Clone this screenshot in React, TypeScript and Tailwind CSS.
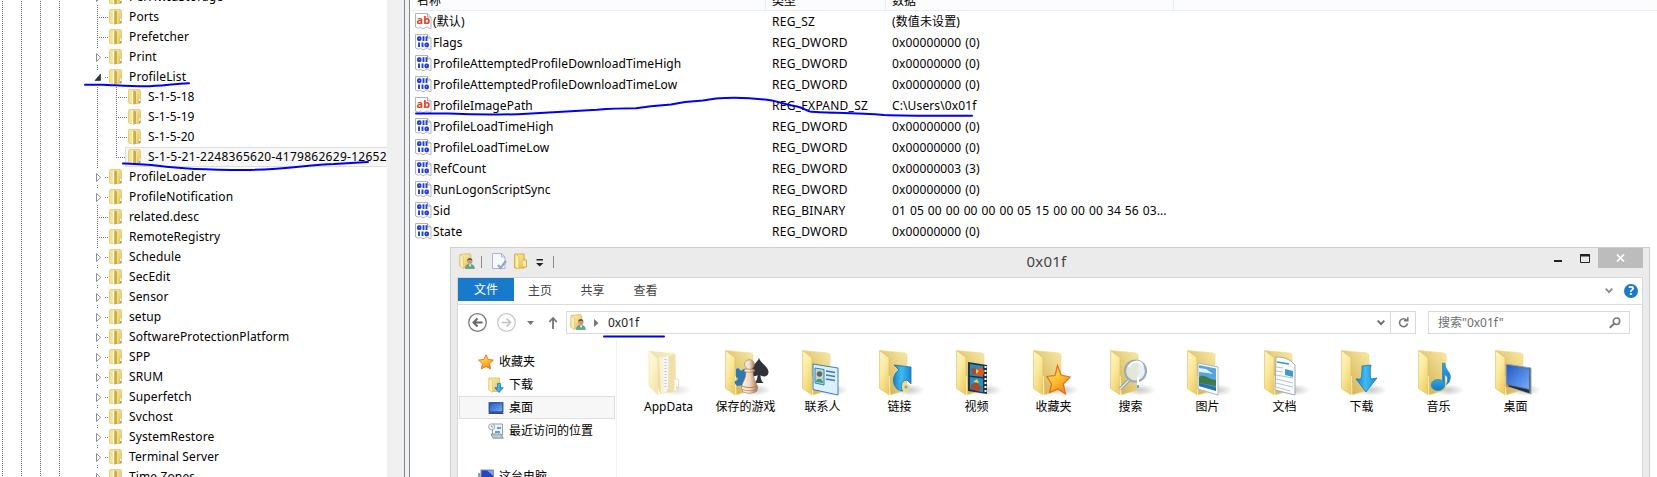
import React from "react";

const uiFont = "font-['Noto_Sans','Noto_Sans_CJK_SC',sans-serif]";

type TreeItem = { label: string; kind: "leaf" | "closed" | "open" | "child" | "last" };

const tree: TreeItem[] = [
  { label: "PerHwIdStorage", kind: "closed" },
  { label: "Ports", kind: "leaf" },
  { label: "Prefetcher", kind: "leaf" },
  { label: "Print", kind: "closed" },
  { label: "ProfileList", kind: "open" },
  { label: "S-1-5-18", kind: "child" },
  { label: "S-1-5-19", kind: "child" },
  { label: "S-1-5-20", kind: "child" },
  { label: "S-1-5-21-2248365620-4179862629-12652", kind: "last" },
  { label: "ProfileLoader", kind: "closed" },
  { label: "ProfileNotification", kind: "closed" },
  { label: "related.desc", kind: "leaf" },
  { label: "RemoteRegistry", kind: "leaf" },
  { label: "Schedule", kind: "closed" },
  { label: "SecEdit", kind: "closed" },
  { label: "Sensor", kind: "closed" },
  { label: "setup", kind: "closed" },
  { label: "SoftwareProtectionPlatform", kind: "closed" },
  { label: "SPP", kind: "closed" },
  { label: "SRUM", kind: "closed" },
  { label: "Superfetch", kind: "closed" },
  { label: "Svchost", kind: "closed" },
  { label: "SystemRestore", kind: "closed" },
  { label: "Terminal Server", kind: "closed" },
  { label: "Time Zones", kind: "closed" },
];

const values: [string, string, string][] = [
  ["(默认)", "REG_SZ", "(数值未设置)"],
  ["Flags", "REG_DWORD", "0x00000000 (0)"],
  ["ProfileAttemptedProfileDownloadTimeHigh", "REG_DWORD", "0x00000000 (0)"],
  ["ProfileAttemptedProfileDownloadTimeLow", "REG_DWORD", "0x00000000 (0)"],
  ["ProfileImagePath", "REG_EXPAND_SZ", "C:\\Users\\0x01f"],
  ["ProfileLoadTimeHigh", "REG_DWORD", "0x00000000 (0)"],
  ["ProfileLoadTimeLow", "REG_DWORD", "0x00000000 (0)"],
  ["RefCount", "REG_DWORD", "0x00000003 (3)"],
  ["RunLogonScriptSync", "REG_DWORD", "0x00000000 (0)"],
  ["Sid", "REG_BINARY", "01 05 00 00 00 00 00 05 15 00 00 00 34 56 03..."],
  ["State", "REG_DWORD", "0x00000000 (0)"],
];

function Gradients() {
  return (
    <svg className="absolute h-0 w-0">
      <defs>
        <linearGradient id="flap" x1="0" y1="0" x2="0.6" y2="1">
          <stop offset="0" stopColor="#fdf6c8" />
          <stop offset="0.5" stopColor="#fbea9e" />
          <stop offset="1" stopColor="#efd068" />
        </linearGradient>
        <linearGradient id="inner" x1="1" y1="0" x2="0" y2="1">
          <stop offset="0" stopColor="#f8e9a6" />
          <stop offset="0.5" stopColor="#e3c975" />
          <stop offset="1" stopColor="#cda64c" />
        </linearGradient>
        <linearGradient id="small" x1="0" y1="0" x2="1" y2="1">
          <stop offset="0" stopColor="#fbf3bb" />
          <stop offset="1" stopColor="#e0bf55" />
        </linearGradient>
        <linearGradient id="blue" x1="0" y1="0" x2="0" y2="1">
          <stop offset="0" stopColor="#2fa8e8" />
          <stop offset="1" stopColor="#1378bf" />
        </linearGradient>
        <linearGradient id="bright" x1="0" y1="0" x2="1" y2="0">
          <stop offset="0" stopColor="#1b81c8" />
          <stop offset="0.45" stopColor="#3fbcf3" />
          <stop offset="1" stopColor="#1d87cf" />
        </linearGradient>
        <linearGradient id="screen" x1="0" y1="0" x2="1" y2="1">
          <stop offset="0" stopColor="#2458c4" />
          <stop offset="1" stopColor="#71aefc" />
        </linearGradient>
        <linearGradient id="star" x1="0" y1="0" x2="0.6" y2="1">
          <stop offset="0" stopColor="#fff3a0" />
          <stop offset="0.55" stopColor="#fdc02e" />
          <stop offset="1" stopColor="#f08a1c" />
        </linearGradient>
        <linearGradient id="pawn" x1="0" y1="0" x2="1" y2="0">
          <stop offset="0" stopColor="#fff6ea" />
          <stop offset="0.5" stopColor="#f0d9c0" />
          <stop offset="1" stopColor="#a87c5a" />
        </linearGradient>
        <radialGradient id="shade">
          <stop offset="0" stopColor="#777" stopOpacity="0.4" />
          <stop offset="1" stopColor="#777" stopOpacity="0" />
        </radialGradient>
      </defs>
    </svg>
  );
}

function SmallFolder() {
  return (
    <svg width="13" height="16" viewBox="0 0 13 16" className="shrink-0">
      <path d="M1 .6h10.6l1 1v12.3l-1 .6H1.5L.4 13.6V1.4z" fill="url(#small)" stroke="#dcc374" strokeWidth=".8" />
      <path d="M1 1.200h3.200v13H1z" fill="#f5e48e" />
      <path d="M3.800 2.500 5.500 1.500v14L3.800 14.500z" fill="#fffbe0" />
      <path d="M5.300 1.200 8 2.400v12.200l-2.700 1.100z" fill="#d0aa40" />
      <path d="M8 2.200 9 1.300v12.500l-1 .8z" fill="#f3df8e" />
      <path d="M11.200 9.500h1v4h-1z" fill="#fff" />
      <path d="M11.200 12h1v2h-1z" fill="#38a1dc" />
    </svg>
  );
}

function Gutter({ kind }: { kind: TreeItem["kind"] }) {
  const nested = kind === "child" || kind === "last";
  const vertical = kind === "leaf" || nested ? "M37.5 0v20" : kind === "open" ? "M37.5 0v3" : "M37.5 0v2M37.5 18v2";
  const arrow = kind === "closed" || kind === "open";
  return (
    <svg width={nested ? 68 : 49} height="20" className="shrink-0" shapeRendering="crispEdges">
      <g stroke="#707070" strokeDasharray="1 1" fill="none">
        <path d={vertical} />
        {kind === "leaf" && <path d="M39 10.5h9" />}
        {arrow && <path d="M45 10.5h3" />}
        {nested && <path d={kind === "last" ? "M56.5 0v11" : "M56.5 0v20"} />}
        {nested && <path d="M58 10.5h9" />}
      </g>
      {kind === "closed" && (
        <path d="M36.500 6.500v8l4.200-4z" fill="#fff" stroke="#8f8f8f" shapeRendering="auto" />
      )}
      {kind === "open" && <path d="M40.500 7v6.500h-5.500z" fill="#333" stroke="#222" strokeWidth=".6" shapeRendering="auto" />}
    </svg>
  );
}

function TreeRow({ item }: { item: TreeItem }) {
  const selected = item.kind === "last";
  return (
    <div className="flex h-5 shrink-0 items-center">
      <Gutter kind={item.kind} />
      <div
        className={
          selected
            ? "-ml-[3px] flex h-5 w-[262px] items-center border-y border-l border-[#dedede] bg-[#f7f7f7] pl-[2px]"
            : "flex h-5 items-center"
        }
      >
        <SmallFolder />
        <span
          className={
            selected
              ? "ml-[7px] text-[12px] leading-5 tracking-[0.28px] whitespace-nowrap"
              : "ml-[7px] text-[12px] leading-5 tracking-[0.12px] whitespace-nowrap"
          }
        >
          {item.label}
        </span>
      </div>
    </div>
  );
}

function Guide() {
  return <div className="w-px bg-[repeating-linear-gradient(to_bottom,#fff_0_1px,#666_1px_2px)]" />;
}

function ValueIcon({ text }: { text: boolean }) {
  return (
    <svg width="17" height="17" viewBox="0 0 17 17" className="shrink-0">
      <path
        d="M.5.5h12l3.500 3.500v11.500l-2-.2-1.500-1.300-2 .4-1.500 1.200-2-.2-1.500-1.200-2 1-3-1.200z"
        fill="#fff"
        stroke="#b4b4b4"
      />
      <path d="M12.500.5V4H16" fill="#eee" stroke="#999" strokeWidth=".8" />
      {text ? (
        <text x="1.500" y="10.500" fontSize="11" fontWeight="700" fill="#d9431e" className="font-['Open_Sans',sans-serif]">
          ab
        </text>
      ) : (
        <g stroke="#1f3fd6" strokeWidth="1.900" fill="none">
          <rect x="3" y="3.200" width="2.600" height="2.800" rx=".8" />
          <path d="M8.500 2.300v4.600M11.500 2.300v4.600M4 8.500v4.600M7.500 8.500v4.600" />
          <rect x="10.400" y="9.400" width="2.600" height="2.800" rx=".8" />
        </g>
      )}
    </svg>
  );
}

function Registry() {
  return (
    <div className="flex h-full flex-1 flex-col bg-white text-[12px]">
      <div className="flex h-[11px] shrink-0 items-end overflow-hidden border-b border-[#e3eef9] bg-[#fcfcfc] leading-[16px]">
        <div className="h-[17px] w-[355px] shrink-0 border-r border-[#e3eef9] pl-[6px]">名称</div>
        <div className="h-[17px] w-[120px] shrink-0 border-r border-[#e3eef9] pl-[6px]">类型</div>
        <div className="h-[17px] w-[288px] shrink-0 border-r border-[#e3eef9] pl-[6px]">数据</div>
      </div>
      {values.map(([name, type, data]) => (
        <div key={name} className="flex h-[21px] shrink-0 items-center whitespace-nowrap">
          <div className="flex w-[361px] items-center gap-px pl-[4px]">
            <ValueIcon text={type.endsWith("SZ")} />
            <span className="tracking-[0.1px]">{name}</span>
          </div>
          <div className="w-[120px] tracking-[0.25px]">{type}</div>
          <div className="tracking-[0.12px] [word-spacing:0.7px]">{data}</div>
        </div>
      ))}
    </div>
  );
}

function UserFolder() {
  return (
    <svg width="17" height="17" viewBox="0 0 17 17" className="shrink-0">
      <path d="M1 1.500 8 .8h3l.8 1v13H5L.8 13z" fill="url(#small)" stroke="#d9b85c" strokeWidth=".8" />
      <path d="M1 1.500 4.500 4v12L1 13.300z" fill="#fbeeb0" stroke="#dcbf68" strokeWidth=".6" />
      <path d="M6.500 15.500c0-3 1.500-4.200 4.200-4.200s4.500 1.200 4.800 4.200z" fill="#5fa98a" stroke="#3c8567" strokeWidth=".5" />
      <path d="m9.800 11.500 1.300 2.500 1.200-2.500z" fill="#fff" />
      <circle cx="10.800" cy="8.200" r="2.600" fill="#c49a7e" />
      <path d="M8.200 7.600c0-3.600 5.200-3.600 5.200 0-1.400-1.200-3.800-1.200-5.200 0z" fill="#5c5248" />
    </svg>
  );
}

function StarPath({ s = 1, x = 0, y = 0 }: { s?: number; x?: number; y?: number }) {
  return (
    <path
      transform={`translate(${x} ${y}) scale(${s})`}
      d="m8 .8 2.200 4.700 5.200.6-3.800 3.600 1 5.200L8 12.400l-4.600 2.500 1-5.200L.6 6.100l5.200-.6z"
      fill="url(#star)"
      stroke="#e0701c"
      strokeWidth=".9"
    />
  );
}

function SideIcon({ name }: { name: string }) {
  return (
    <svg width="16" height="16" viewBox="0 0 16 16" className="shrink-0">
      {name === "star" && <StarPath />}
      {name === "download" && (
        <>
          <path d="M1 1h10.500v13.500H4L1 13z" fill="url(#small)" stroke="#dcb95c" strokeWidth=".8" />
          <path d="m1 1 3.500 2v12.500L1 13.200z" fill="#fbefae" stroke="#dcbf68" strokeWidth=".6" />
          <path d="M9.500 6.500h3v4.200h2.700L11 15.600l-4.200-4.900h2.700z" fill="url(#bright)" stroke="#1671b5" strokeWidth=".7" />
        </>
      )}
      {name === "desktop" && (
        <>
          <rect x=".5" y="2" width="15" height="12" fill="#9aa6b4" />
          <rect x="1.200" y="2.800" width="13.600" height="9" fill="url(#screen)" stroke="#1c3e86" strokeWidth=".8" />
          <path d="M1 12.200h14V14H1z" fill="#37475e" />
        </>
      )}
      {name === "recent" && (
        <>
          <path d="M4.500 1h10v11H4.500z" fill="#eef3f7" stroke="#8a949d" strokeWidth=".9" />
          <path d="M3 11h10l2.400 4.200H5z" fill="#c0c8ce" stroke="#7d878f" strokeWidth=".8" />
          <path d="M9 4h4v2H9zM7 8h5v2H7z" fill="#59a5cf" />
          <circle cx="3.600" cy="3.800" r="3" fill="#fafafa" stroke="#8f979e" strokeWidth=".9" />
          <path d="M3.600 2.200v1.800h1.500" fill="none" stroke="#666" strokeWidth=".7" />
        </>
      )}
      {name === "computer" && (
        <>
          <rect x="3" y="1" width="12.500" height="9.500" fill="#2346c8" stroke="#8793a5" />
          <path d="M9 1.500h6v5z" fill="#7ba3f5" />
          <rect x="0" y="4" width="2.500" height="10" fill="#9aa3ad" />
          <path d="M.5 5h1.500v2H.5z" fill="#4bc04f" />
        </>
      )}
    </svg>
  );
}

const folders = [
  ["AppData", "appdata"],
  ["保存的游戏", "games"],
  ["联系人", "contacts"],
  ["链接", "links"],
  ["视频", "video"],
  ["收藏夹", "favorites"],
  ["搜索", "search"],
  ["图片", "pictures"],
  ["文档", "documents"],
  ["下载", "downloads"],
  ["音乐", "music"],
  ["桌面", "desktop"],
];

function Emblem({ name }: { name: string }) {
  switch (name) {
    case "games":
      return (
        <>
          <path d="M11 20c2-1 3-1 4 1 2 2 3-2 6-1v16l-9 1c-1-2-3-2-2-5 3 0 4-3 1-4z" fill="#2f78b0" />
          <path d="M34 9c1.500 5 9.500 9 9.500 14 0 5-6 5.500-8 3 0 4 1 6 3 8h-9c2-2 3-4 3-8-3 2.500-8 1-8-3 0-5 8-9 9.500-14z" fill="#30343a" />
          <path d="M19 39c2-1 10-1 13 0v3c-4 3-11 3-15 0z" fill="url(#pawn)" stroke="#9f7350" strokeWidth=".6" />
          <path d="M21 21h7c0 6 1 9 3 12.500l1.500 4v2c-3 3-13 3-16 0v-2l1.500-4c2-3.500 3-7 3-12.500z" fill="url(#pawn)" stroke="#9f7350" strokeWidth=".6" />
          <ellipse cx="24.500" cy="21.500" rx="5.500" ry="1.800" fill="url(#pawn)" stroke="#9f7350" strokeWidth=".6" />
          <circle cx="24.500" cy="15.500" r="4.800" fill="url(#pawn)" stroke="#9f7350" strokeWidth=".6" />
          <path d="M17 37c4 2 11 2 15 0" fill="none" stroke="#a87c58" />
        </>
      );
    case "contacts":
      return (
        <>
          <path d="m11 15 25 4v27l-25-5.500z" fill="#dbeffc" stroke="#3d82b4" />
          <path d="m13 19 9 1.500V36l-9-2z" fill="#b5dcd3" stroke="#3d7fae" />
          <circle cx="17.500" cy="25" r="2.700" fill="#76614d" />
          <path d="M14 33c0-5 7-4 7 1z" fill="#4a987b" />
          <path d="m24 22 9 1.500M24 26l9 1.500M24 30l9 1.500" stroke="#3d7bb1" strokeWidth="1.500" />
        </>
      );
    case "links":
      return (
        <>
          <path d="m26 33 5 4-2 5-5 1-2-5z" fill="#f3d98a" />
          <circle cx="27" cy="38" r="1.500" fill="#5aa9ed" />
          <path d="m15 16 17 2v17l-4-4c-6 0-7 6-4.500 11-10-1-12.500-15-3.500-21z" fill="url(#bright)" stroke="#1373b8" strokeWidth=".8" />
        </>
      );
    case "video":
      return (
        <>
          <path d="m12 13 19 3v29l-19-3z" fill="#26333b" />
          <path d="m14 15 13 2v11l-13-1.500zM14 28l13 1.500v14L14 40z" fill="#2190c9" />
          <circle cx="24" cy="23" r="4" fill="#e75424" />
          <path d="m15 20 4-2 2 7-5 1zM15 36l5-3 6 6-3 3-8-2z" fill="#a8482c" />
          <path d="m20 20 3 2-3 3zM17 33l4-3 2 4z" fill="#f8ce38" />
          <path d="M29.500 17v27" stroke="#fff" strokeWidth="2" strokeDasharray="2 2" />
        </>
      );
    case "favorites":
      return (
        <path
          d="m24.500 16.500 3.600 9.500 9 2-6.800 7 2.200 10-7.600-5-8.400 3.500 2-8.500-4.500-7.500 8-1z"
          fill="url(#star)"
          stroke="#e0701c"
          strokeWidth="1.200"
        />
      );
    case "search":
      return (
        <>
          <path d="m19 31-9 9" stroke="#8fa0ae" strokeWidth="3.500" />
          <path d="m19 31-9 9" stroke="#e4ebf0" strokeWidth="1.500" />
          <circle cx="25.500" cy="22" r="10.500" fill="#dfedf3" fillOpacity=".75" stroke="#9cabb8" strokeWidth="2.200" />
          <path d="M19 18c3-7 11-7 14-1" fill="none" stroke="#fff" strokeWidth="2" />
          <path d="M28 28v10" stroke="#fff" strokeWidth="2" />
          <path d="M28 36v3" stroke="#5aabe8" strokeWidth="2" />
        </>
      );
    case "pictures":
      return (
        <>
          <path d="m11 14 20 4v28l-20-6z" fill="#fafcfd" stroke="#aeb9c1" />
          <path d="m12 16 17 3.500v22L12 37z" fill="#58a4df" />
          <path d="m12 19 7 1 7 5-5-1-9-1z" fill="#e3f3fc" />
          <path d="M12 28c6-4 9 3 17 3v6l-17-3z" fill="#3e7b48" />
          <path d="m12 34 17 4v4L12 37z" fill="#2772a8" />
        </>
      );
    case "documents":
      return (
        <>
          <path d="M12 8c8 0 14 2 19 8v30l-20-5z" fill="#fafcfc" stroke="#9eabb4" />
          <path d="m13 13 12 2" stroke="#319aaa" strokeWidth="1.500" />
          <path d="m12 18 7 1M12 22l7 1M12 26l17 3M12 30l17 4M12 34l17 4M12 38l14 4" stroke="#b9c3ca" />
          <path d="m21 20 8 2v6l-8-2z" fill="#4299cc" />
        </>
      );
    case "downloads":
      return (
        <path
          d="m21 17 9-1c-1 5-1 9 0 14l6-1-11 14-10-13 5 0c1-5 1-9 1-13z"
          fill="url(#bright)"
          stroke="#1d79b8"
          strokeWidth=".8"
        />
      );
    case "music":
      return (
        <>
          <path d="M24.500 14 27 14.500c0 8 7 8 5 16-.5 3-2 4-3.500 5 2-6 1-9-2-10v10h-2z" fill="url(#blue)" stroke="#2e8bc1" strokeWidth=".8" />
          <ellipse cx="20" cy="36" rx="6.800" ry="5.500" fill="url(#blue)" stroke="#2e8bc1" strokeWidth=".8" />
        </>
      );
    case "desktop":
      return (
        <>
          <path d="m11 15 25 4v26l-25-8z" fill="#5c6b79" stroke="#9aa5ad" />
          <path d="m12 16 22 4v20l-22-5z" fill="url(#screen)" />
          <path d="m12 36 22 5v3l-22-7z" fill="#242f3d" />
          <circle cx="12" cy="37" r="1.500" fill="#ee8933" />
        </>
      );
    default:
      return null;
  }
}

function BigFolder({ name }: { name: string }) {
  if (name === "appdata") {
    return (
      <svg width="48" height="50" viewBox="0 0 48 50" className="opacity-55">
        <ellipse cx="28" cy="41" rx="16" ry="6" fill="url(#shade)" />
        <path d="M1 2 26 4l2 1v37l-16 3z" fill="url(#inner)" />
        <path d="M1 1.500 10 10v36L1 37z" fill="url(#flap)" stroke="#e2c873" strokeWidth=".6" />
        <path d="M11 8h8v35l-6 2z" fill="#f9e8a4" />
        <path d="m15 9 5-2v33l-4 4z" fill="#eef2f4" />
        <path d="M17.500 10v30" stroke="#7995a8" strokeWidth="2" strokeDasharray="1 2" />
        <path d="m21 7 6-2v37l-5 2z" fill="#e5c661" />
        <path d="M26 30h4.500v10L26 43z" fill="#fff" stroke="#e3c466" />
        <path d="M29 37v3" stroke="#48a6dc" />
      </svg>
    );
  }
  return (
    <svg width="48" height="50" viewBox="0 0 48 50">
      <ellipse cx="30" cy="41" rx="16" ry="6" fill="url(#shade)" />
      <path d="M1 1.500 26 4l2 1.500V41L11 46z" fill="url(#inner)" stroke="#ecd88c" strokeWidth=".6" />
      <path d="M.6 1.500 10 8.500v37.300L.6 39.500z" fill="url(#flap)" stroke="#ddc06a" strokeWidth=".7" />
      <path d="m10.300 27 .5 19" stroke="#f9eba8" strokeWidth="1.200" />
      <Emblem name={name} />
    </svg>
  );
}

function TitleBar() {
  return (
    <div className="flex h-[29px] shrink-0 items-start">
      <div className="flex w-[130px] shrink-0 items-center pt-[5px] pl-[8px]">
        <UserFolder />
        <div className="ml-[5px] h-3 w-px bg-[#8c8c8c]" />
        <svg width="15" height="17" viewBox="0 0 15 17" className="ml-[10px]">
          <path d="M.5.5h9L13 4v11.500H.5z" fill="#f5f8fd" stroke="#a7b5ce" />
          <path d="M9.500.5V4H13" fill="none" stroke="#a7b5ce" />
          <path d="m6 12 2.500 3L14 8" fill="none" stroke="#92a9cf" strokeWidth="2.300" />
        </svg>
        <svg width="14" height="17" viewBox="0 0 14 17" className="ml-[7px]">
          <path d="M.5 1h9.700v14H.5z" fill="url(#small)" stroke="#d8ad42" />
          <path d="m1 1 4 2.500V16l-4-2z" fill="#fff0a6" stroke="#dfb950" strokeWidth=".8" />
          <path d="M9 7h3.500v7H9" fill="#faeba4" stroke="#d8ad42" />
        </svg>
        <svg width="8" height="8" viewBox="0 0 8 8" className="mt-[2px] ml-[8px]">
          <path d="M.5 0h6.500v1.500H.5zM0 4h7.500L3.700 7.500z" fill="#222" />
        </svg>
        <div className="ml-[9px] h-3 w-px shrink-0 bg-[#8c8c8c]" />
      </div>
      <div className="flex-1 pt-[3px] pl-[11px] text-center text-[15px] leading-5 tracking-[0.2px] text-[#444]">0x01f</div>
      <div className="flex w-[148px] shrink-0 items-start justify-end pr-[6px]">
        <svg width="44" height="20">
          <path d="M0 12h8v2H0z" fill="#222" />
          <path d="M26.500 8V14.500h9V8" fill="none" stroke="#222" />
          <path d="M26 6h10v2.500H26z" fill="#222" />
        </svg>
        <div className="flex h-5 w-[45px] items-center justify-center bg-[#bcbcbc]">
          <svg width="9" height="8" viewBox="0 0 9 8">
            <path d="m1 .5 7 7m0-7-7 7" stroke="#fff" strokeWidth="1.700" />
          </svg>
        </div>
      </div>
    </div>
  );
}

function Explorer() {
  return (
    <div
      className={`absolute top-[247px] left-[450px] flex h-[240px] w-[1200px] flex-col border border-[#cfcfcf] bg-[#ebebeb] text-[12px] text-black ${uiFont}`}
    >
      <TitleBar />
      <div className="mx-[6px] flex flex-1 flex-col border border-[#d5d5d5] bg-white">
        <div className="flex h-[27px] shrink-0 border-b border-[#dcdcdc] text-[#444]">
          <div className="h-[23px] w-[56px] bg-[#1979ca] text-center leading-[23px] text-white">文件</div>
          <div className="w-[52px] text-center leading-[26px]">主页</div>
          <div className="w-[53px] text-center leading-[26px]">共享</div>
          <div className="w-[53px] text-center leading-[26px]">查看</div>
          <div className="flex flex-1 items-center justify-end gap-[11px] pr-[4px]">
            <svg width="8" height="6">
              <path d="m.7.7 3.300 3.500L7.300.7" fill="none" stroke="#8a8a8a" strokeWidth="1.800" />
            </svg>
            <div className="flex size-[14px] items-center justify-center rounded-full bg-[#1979ca] text-[12px] leading-none font-bold text-white">
              ?
            </div>
          </div>
        </div>
        <div className="flex h-[35px] shrink-0 items-center">
          <svg width="108" height="35" fill="none">
            <circle cx="19.500" cy="17.500" r="8.800" stroke="#777" strokeWidth="1.300" />
            <path d="M24.500 17.500h-9m4-4-4 4 4 4" stroke="#666" strokeWidth="2" />
            <circle cx="48.500" cy="17.500" r="8.800" stroke="#c8c8c8" strokeWidth="1.300" />
            <path d="M43.500 17.500h9m-4-4 4 4-4 4" stroke="#c4c4c4" strokeWidth="1.700" />
            <path d="M69 16h7l-3.500 4z" fill="#777" />
            <path d="M95 24V13m-3.800 4 3.800-4 3.800 4" stroke="#737373" strokeWidth="1.800" />
          </svg>
          <div className="flex h-[23px] w-[850px] items-center border border-[#d9d9d9] pl-[3px]">
            <UserFolder />
            <svg width="5" height="8" className="ml-[7px]">
              <path d="m0 0 4.500 4L0 8z" fill="#777" />
            </svg>
            <span className="ml-[9px] flex-1 leading-5 text-[#222]">0x01f</span>
            <svg width="8" height="6" className="mr-[5px]">
              <path d="m.7.7 3.300 3.500L7.300.7" fill="none" stroke="#666" strokeWidth="1.800" />
            </svg>
            <div className="flex h-full w-[25px] items-center justify-center border-l border-[#d9d9d9]">
              <svg width="11" height="11" viewBox="0 0 11 11">
                <path d="M8.700 3.200a4 4 0 1 0 .8 3.300M6 3.800h3.800V.2" fill="none" stroke="#777" strokeWidth="1.600" />
              </svg>
            </div>
          </div>
          <div className="ml-[12px] flex h-[23px] w-[202px] items-center justify-between border border-[#d9d9d9] pr-[8px] pl-[9px] leading-5 text-[#6d6d6d]">
            搜索"0x01f"
            <svg width="12" height="12" viewBox="0 0 12 12">
              <path d="m.8 10.800 4.200-4" stroke="#777" strokeWidth="2" />
              <circle cx="7.500" cy="4.200" r="3.200" fill="none" stroke="#777" strokeWidth="1.500" />
            </svg>
          </div>
        </div>
        <div className="flex flex-1 overflow-hidden">
          <div className="flex w-[159px] shrink-0 flex-col border-r border-[#f2f2f2] pt-[10px]">
            <SideRow icon="star" label="收藏夹" top />
            <SideRow icon="download" label="下载" />
            <SideRow icon="desktop" label="桌面" selected />
            <SideRow icon="recent" label="最近访问的位置" />
            <div className="h-[23px] shrink-0" />
            <SideRow icon="computer" label="这台电脑" top />
          </div>
          <div className="flex pt-[9px] pl-[13px]">
            {folders.map(([label, name]) => (
              <div key={name} className="flex w-[77px] shrink-0 flex-col items-center">
                <div className="flex w-full pl-[18px]">
                  <BigFolder name={name} />
                </div>
                <span className="leading-4 whitespace-nowrap">{label}</span>
              </div>
            ))}
          </div>
        </div>
      </div>
    </div>
  );
}

function SideRow({ icon, label, top, selected }: { icon: string; label: string; top?: boolean; selected?: boolean }) {
  return (
    <div
      className={
        selected
          ? "ml-px flex h-[23px] w-[156px] shrink-0 items-center gap-[5px] border border-[#dedede] bg-[#f7f7f7] pl-[28px]"
          : top
            ? "flex h-[23px] shrink-0 items-center gap-[5px] pl-[20px]"
            : "flex h-[23px] shrink-0 items-center gap-[5px] pl-[30px]"
      }
    >
      <SideIcon name={icon} />
      <span className="leading-5 whitespace-nowrap">{label}</span>
    </div>
  );
}

function Strokes() {
  return (
    <svg
      width="1657"
      height="477"
      className="pointer-events-none absolute top-0 left-0"
      fill="none"
      stroke="#0000f5"
      strokeWidth="2"
      strokeLinecap="round"
      strokeLinejoin="round"
    >
      <path d="M85 84.700h18c14 .6 27 1.600 42 1.600 17 0 27-2.500 44-3" />
      <path d="M123 163.500c13 .5 22 .8 35 2.300 22 3 50 4.200 86 4.200 40 0 62-5 90-6l34-2" />
      <path d="M416 113.500h33c26 1.300 52 1.500 78 .2l70-4c12-1 28-1.500 39-1.500l15-2 20-1.700 14-2.500 18-1.500 13-2c20-1.600 42 0 56 2 10 2 15 5 25 6 6 1 8 4 13 5 11 1.500 44 1 74 3.500 18 .8 52 .8 88 .7" />
      <path d="M604 336.500h60" />
    </svg>
  );
}

export default function App() {
  return (
    <div className={`relative flex h-[477px] w-[1657px] overflow-hidden bg-white text-black ${uiFont}`}>
      <Gradients />
      <div className="flex h-full w-[387px] shrink-0 overflow-hidden">
        <div className="flex w-[60px] shrink-0 gap-[18px] pl-[2px]">
          <Guide />
          <Guide />
          <Guide />
          <Guide />
        </div>
        <div className="-mt-[13px] flex flex-col">
          {tree.map((item) => (
            <TreeRow key={item.label} item={item} />
          ))}
        </div>
      </div>
      <div className="w-[17px] shrink-0 bg-[#f0f0f0]" />
      <div className="w-[6px] shrink-0 border-x border-[#82868f] bg-[#f0f0f0]" />
      <div className="w-px shrink-0" />
      <Registry />
      <Explorer />
      <Strokes />
    </div>
  );
}
